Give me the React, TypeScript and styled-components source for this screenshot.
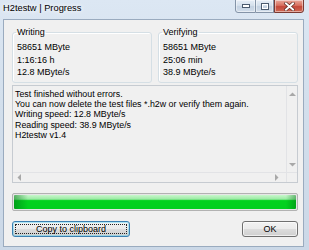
import React from "react";
import styled, { createGlobalStyle } from "styled-components";

const Global = createGlobalStyle`
  html, body { margin: 0; padding: 0; }
  body {
    width: 309px; height: 250px; overflow: hidden;
    font-family: "Liberation Sans", Arial, sans-serif;
    background: #cfdbe8;
  }
`;

const Window = styled.div`
  width: 309px;
  height: 250px;
  box-sizing: border-box;
  display: flex;
  flex-direction: column;
  padding: 0 5px 3px 3px;
  background: linear-gradient(180deg, #dce7f3 0%, #d3dfec 40%, #cbd8e7 100%);
`;

const TitleBar = styled.div`
  height: 19px;
  display: flex;
  align-items: flex-start;
  justify-content: space-between;
`;

const Title = styled.div`
  font-size: 9.3px;
  line-height: 11px;
  padding-top: 3px;
  color: #000;
  text-shadow: 0 0 4px #fff, 0 0 6px #fff;
`;

const Caption = styled.div`
  display: flex;
  margin-top: -1px;
`;

const CapBtn = styled.div<{ $w: number; $close?: boolean; $first?: boolean }>`
  width: ${(p) => p.$w}px;
  height: 14px;
  box-sizing: border-box;
  display: flex;
  align-items: center;
  justify-content: center;
  border: 1px solid ${(p) => (p.$close ? "#7a3a33" : "#8494a8")};
  border-left-width: ${(p) => (p.$first || p.$close ? 1 : 0)}px;
  border-radius: ${(p) =>
    p.$first ? "0 0 0 3px" : p.$close ? "0 0 3px 0" : "0"};
  background: ${(p) =>
    p.$close
      ? "linear-gradient(180deg, #e9a99c 0%, #d8705f 45%, #c4483a 55%, #d06a55 100%)"
      : "linear-gradient(180deg, #e6eef7 0%, #d5e0ec 45%, #c3d1e1 55%, #d2deeb 100%)"};
  box-shadow: inset 0 0 0 1px rgba(255, 255, 255, 0.45);
`;

const Client = styled.div`
  flex: 1;
  display: flex;
  flex-direction: column;
  background: #f0f0f0;
  border: 1px solid #9aabbf;
  padding: 7px 5px 9px 8px;
  font-size: 9px;
  color: #000;
`;

const Groups = styled.div`
  display: grid;
  grid-template-columns: 1fr 1fr;
  gap: 6px;
`;

const Group = styled.fieldset`
  margin: 0;
  height: 56px;
  box-sizing: border-box;
  border: 1px solid #d5dfe5;
  border-radius: 3px;
  padding: 3px 4px 3px 4px;
  box-shadow: inset 1px 1px 0 #fff;
`;

const Legend = styled.legend`
  padding: 0 1px;
  margin-left: -1px;
  line-height: 11px;
  font-size: 9px;
`;

const Value = styled.div`
  line-height: 12.5px;
  white-space: nowrap;
`;

const Edit = styled.div`
  margin-top: 2px;
  height: 98px;
  box-sizing: border-box;
  border: 1px solid #c6cbd1;
  display: grid;
  grid-template-columns: 1fr 11px;
  grid-template-rows: 1fr 10px;
  background: #f0f0f0;
`;

const EditText = styled.div`
  padding: 3px 2px 0 2px;
  font-size: 8.85px;
  line-height: 10.2px;
  white-space: nowrap;
  overflow: hidden;
`;

const VScroll = styled.div`
  border-left: 1px solid #e2e3e6;
  display: flex;
  flex-direction: column;
  justify-content: space-between;
  align-items: center;
  padding: 6px 0 5px;
`;

const HScroll = styled.div`
  border-top: 1px solid #e2e3e6;
  display: flex;
  justify-content: space-between;
  align-items: center;
  padding: 0 7px 0 4px;
`;

const Corner = styled.div`
  border-top: 1px solid #e2e3e6;
  border-left: 1px solid #e2e3e6;
  background: #f0f0f0;
`;

const Progress = styled.div`
  margin-top: 10px;
  height: 18px;
  box-sizing: border-box;
  border: 1px solid #b2b2b2;
  border-radius: 2px;
  padding: 1px;
  background: #e6e6e6;
`;

const Fill = styled.div`
  height: 100%;
  border-radius: 1px;
  background:
    linear-gradient(90deg, rgba(0,120,20,0.55) 0px, rgba(0,120,20,0) 14px, rgba(0,120,20,0) calc(100% - 10px), rgba(0,110,20,0.45) 100%),
    linear-gradient(180deg, #c8f7cc 0%, #9aeaa3 30%, #03d21f 40%, #02cf1f 100%);
`;

const Buttons = styled.div`
  margin-top: 10px;
  display: flex;
  justify-content: space-between;
`;

const Button = styled.div<{ $w: number; $default?: boolean }>`
  width: ${(p) => p.$w}px;
  height: 16px;
  box-sizing: border-box;
  border: 1px solid ${(p) => (p.$default ? "#3c7fb1" : "#707070")};
  border-radius: 3px;
  background: linear-gradient(180deg, #f2f2f2 0%, #ebebeb 50%, #dddddd 50%, #cfcfcf 100%);
  box-shadow: inset 0 0 0 1px ${(p) => (p.$default ? "#48d5fb66" : "#ffffffaa")};
  display: flex;
  align-items: center;
  justify-content: center;
  padding: 2px;
  font-size: 9px;
`;

const Focus = styled.div`
  flex: 1;
  align-self: stretch;
  display: flex;
  align-items: center;
  justify-content: center;
  border: 1px dotted #222;
`;

const Label = styled.span`
  line-height: 10px;
`;

const Arrow = ({ dir }: { dir: "up" | "down" | "left" | "right" }) => {
  const pts = {
    up: "0,4 3.5,0.5 7,4",
    down: "0,0 3.5,3.5 7,0",
    left: "4,0 0.5,3.5 4,7",
    right: "0,0 3.5,3.5 0,7",
  }[dir];
  const vertical = dir === "up" || dir === "down";
  return (
    <svg width={vertical ? 7 : 4} height={vertical ? 4 : 7} viewBox={vertical ? "0 0 7 4" : "0 0 4 7"}>
      <polygon points={pts} fill="#a8a8a8" />
    </svg>
  );
};

export default function App() {
  return (
    <>
      <Global />
      <Window>
        <TitleBar>
          <Title>H2testw | Progress</Title>
          <Caption>
            <CapBtn $w={21} $first>
              <svg width="8" height="4" viewBox="0 0 8 4">
                <rect x="0.5" y="0.5" width="7" height="3" fill="#fff" stroke="#4a5a6e" strokeWidth="1" />
              </svg>
            </CapBtn>
            <CapBtn $w={18}>
              <svg width="8" height="7" viewBox="0 0 8 7">
                <rect x="0.5" y="0.5" width="7" height="6" fill="none" stroke="#4a5a6e" strokeWidth="1" />
                <rect x="1.5" y="1.5" width="5" height="4" fill="none" stroke="#fff" strokeWidth="1" />
              </svg>
            </CapBtn>
            <CapBtn $w={30} $close>
              <svg width="11" height="9" viewBox="0 0 11 9">
                <path d="M2 1.5 L9 7.5 M9 1.5 L2 7.5" stroke="#5a2a22" strokeWidth="3.4" strokeLinecap="square" />
                <path d="M2 1.5 L9 7.5 M9 1.5 L2 7.5" stroke="#fff" strokeWidth="2" strokeLinecap="square" />
              </svg>
            </CapBtn>
          </Caption>
        </TitleBar>
        <Client>
          <Groups>
            <Group>
              <Legend>Writing</Legend>
              <Value>58651 MByte</Value>
              <Value>1:16:16 h</Value>
              <Value>12.8 MByte/s</Value>
            </Group>
            <Group>
              <Legend>Verifying</Legend>
              <Value>58651 MByte</Value>
              <Value>25:06 min</Value>
              <Value>38.9 MByte/s</Value>
            </Group>
          </Groups>
          <Edit>
            <EditText>
              <div>Test finished without errors.</div>
              <div>You can now delete the test files *.h2w or verify them again.</div>
              <div>Writing speed: 12.8 MByte/s</div>
              <div>Reading speed: 38.9 MByte/s</div>
              <div>H2testw v1.4</div>
            </EditText>
            <VScroll>
              <Arrow dir="up" />
              <Arrow dir="down" />
            </VScroll>
            <HScroll>
              <Arrow dir="left" />
              <Arrow dir="right" />
            </HScroll>
            <Corner />
          </Edit>
          <Progress>
            <Fill />
          </Progress>
          <Buttons>
            <Button $w={118} $default>
              <Focus>
                <Label>Copy to clipboard</Label>
              </Focus>
            </Button>
            <Button $w={56}>
              <Label>OK</Label>
            </Button>
          </Buttons>
        </Client>
      </Window>
    </>
  );
}
